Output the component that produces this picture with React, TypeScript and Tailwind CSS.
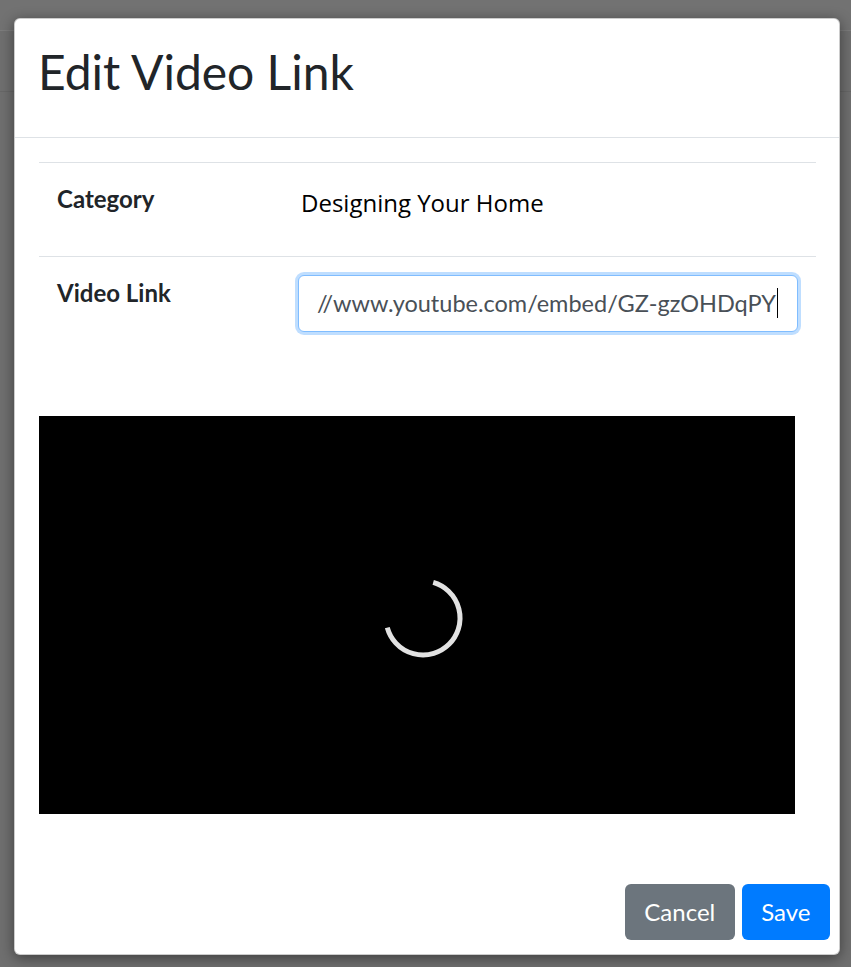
function Spinner() {
  return (
    <svg width="90" height="90" viewBox="0 0 90 90" className="ml-[12px] mt-[6px]">
      <path
        d="M55.2 9.4 A37 37 0 1 1 9.3 54.6"
        fill="none"
        stroke="#e2e2e2"
        strokeWidth="5"
      />
    </svg>
  );
}

function EditVideoModal() {
  return (
    <div className="absolute left-[14px] top-[18px] w-[826px] h-[937px] flex flex-col bg-white border border-black/20 rounded-[6px] shadow-[0_3px_14px_rgba(0,0,0,0.45)] font-['Lato',sans-serif] text-[#212529]">
      <div className="pl-[23px] pr-[24px] pt-[24px] pb-[24px] border-b border-[#dee2e6]">
        <h1 className="text-[48px] leading-[1.2] font-normal mb-[12px]">Edit Video Link</h1>
      </div>

      <div className="flex-1 px-[24px] pt-[24px]">
        <table className="w-[777px] border-collapse text-[24px] leading-[36px]">
          <tbody>
            <tr className="border-t border-[#dee2e6]">
              <td className="w-[241px] p-[18px] align-top font-bold">Category</td>
              <td className="p-[18px] align-top">
                <div className="h-[57px] pt-[4px] pl-[3px] font-['Open_Sans',sans-serif] text-black">
                  Designing Your Home
                </div>
              </td>
            </tr>
            <tr className="border-t border-[#dee2e6]">
              <td className="p-[18px] align-top font-bold">Video Link</td>
              <td className="p-[18px] align-top">
                <div className="h-[57px] w-[500px] border-[1.5px] border-[#80bdff] rounded-[6px] shadow-[0_0_0_3px_rgba(0,123,255,0.25)] py-[9px] pl-[18px] pr-[19px] bg-white">
                  <div className="flex justify-end overflow-hidden whitespace-nowrap text-[23.5px] text-[#495057]">
                    <span className="shrink-0">https://www.youtube.com/embed/GZ-gzOHDqPY</span>
                    <span className="shrink-0 inline-block w-px h-[30px] mt-[3px] ml-px bg-black" />
                  </div>
                </div>
              </td>
            </tr>
          </tbody>
        </table>

        <div className="mt-[66px] w-[756px] h-[398px] bg-black flex items-center justify-center">
          <Spinner />
        </div>
      </div>

      <div className="flex justify-end gap-[7px] pr-[9px] pb-[14px]">
        <button className="h-[56px] px-[19.5px] rounded-[6px] bg-[#6c757d] text-white text-[24px] leading-[36px]">
          Cancel
        </button>
        <button className="h-[56px] px-[19.5px] rounded-[6px] bg-[#007bff] text-white text-[24px] leading-[36px]">
          Save
        </button>
      </div>
    </div>
  );
}

export default function App() {
  return (
    <div className="relative w-[851px] h-[967px] overflow-hidden bg-[#6f6f6f]">
      <div className="h-[31px] bg-[#727272] border-b border-[#7c7c7c]" />
      <div className="h-[61px] border-b border-[#676767]" />
      <EditVideoModal />
    </div>
  );
}
